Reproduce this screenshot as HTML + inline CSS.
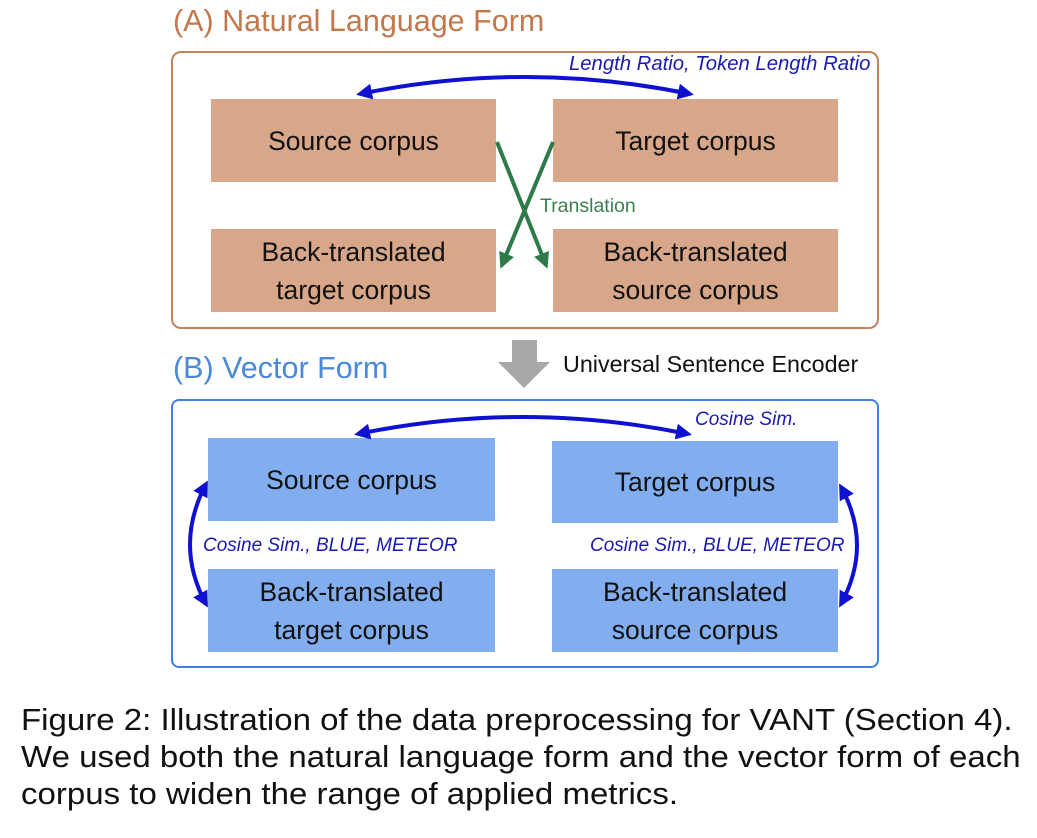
<!DOCTYPE html>
<html><head><meta charset="utf-8"><style>
body{margin:0;width:1037px;height:838px;background:#fff;position:relative;overflow:hidden;font-family:"Liberation Sans",sans-serif}
.a{position:absolute;white-space:nowrap}
.bx{position:absolute;display:flex;align-items:center;justify-content:center;text-align:center;font-size:26.5px;line-height:38px;color:#111}
.o{background:#d8a78a}
.b{background:#82aef0}
.lab{position:absolute;font-style:italic;color:#1a1ab0;font-size:19px;white-space:nowrap}
.cap{position:absolute;left:21px;font-size:31px;color:#111;white-space:nowrap;transform-origin:0 0;transform:scaleX(1.065)}
</style></head><body>
<div class="a" style="left:173px;top:4px;font-size:30.5px;color:#c2784c">(A) Natural Language Form</div>
<div class="a" style="left:171px;top:51px;width:704px;height:274px;border:2px solid #c2825c;border-radius:10px"></div>
<div class="bx o" style="left:211px;top:99px;width:285px;height:83px">Source corpus</div>
<div class="bx o" style="left:553px;top:99px;width:285px;height:83px">Target corpus</div>
<div class="bx o" style="left:211px;top:229px;width:285px;height:83px">Back-translated<br>target corpus</div>
<div class="bx o" style="left:553px;top:229px;width:285px;height:83px">Back-translated<br>source corpus</div>
<div class="lab" style="left:569px;top:53px;font-size:20.3px">Length Ratio, Token Length Ratio</div>
<div class="a" style="left:540px;top:195px;font-size:19.5px;color:#3a8050">Translation</div>

<div class="a" style="left:173px;top:351px;font-size:30.5px;color:#4a88d8">(B) Vector Form</div>
<div class="a" style="left:563px;top:351px;font-size:23.3px;color:#111">Universal Sentence Encoder</div>
<div class="a" style="left:171px;top:399px;width:704px;height:265px;border:2px solid #3f80e0;border-radius:8px"></div>
<div class="bx b" style="left:208px;top:438px;width:287px;height:83px">Source corpus</div>
<div class="bx b" style="left:552px;top:441px;width:286px;height:82px">Target corpus</div>
<div class="bx b" style="left:208px;top:569px;width:287px;height:83px">Back-translated<br>target corpus</div>
<div class="bx b" style="left:552px;top:569px;width:286px;height:83px">Back-translated<br>source corpus</div>
<div class="lab" style="left:695px;top:409px">Cosine Sim.</div>
<div class="lab" style="left:203px;top:535px">Cosine Sim., BLUE, METEOR</div>
<div class="lab" style="left:590px;top:535px">Cosine Sim., BLUE, METEOR</div>

<svg class="a" style="left:0;top:0" width="1037" height="838">
<defs>
<marker id="ab" markerWidth="4" markerHeight="4" refX="3" refY="2" orient="auto-start-reverse" markerUnits="strokeWidth"><path d="M0,0 L4,2 L0,4z" fill="#1010d0"/></marker>
<marker id="ag" markerWidth="4" markerHeight="4" refX="3" refY="2" orient="auto" markerUnits="strokeWidth"><path d="M0,0 L4,2 L0,4z" fill="#2e7a4a"/></marker>
</defs>
<g fill="none" stroke="#1010d0" stroke-width="4" marker-start="url(#ab)" marker-end="url(#ab)">
<path d="M360,94 Q525,60 690,94"/>
<path d="M358,434 Q522,400 688,434"/>
<path d="M206,484 Q174,545 206,604"/>
<path d="M841,487 Q873,545 841,604"/>
</g>
<g fill="none" stroke="#2e7a4a" stroke-width="4" marker-end="url(#ag)">
<path d="M497,142 L546,265"/>
<path d="M553,142 L502,265"/>
</g>
<path d="M512,340 H537 V362 H550 L524,388 L498,362 H512Z" fill="#a8a8a8"/>
</svg>

<div class="cap" style="top:702px">Figure 2: Illustration of the data preprocessing for VANT (Section 4).</div>
<div class="cap" style="top:739px">We used both the natural language form and the vector form of each</div>
<div class="cap" style="top:776px">corpus to widen the range of applied metrics.</div>
</body></html>
